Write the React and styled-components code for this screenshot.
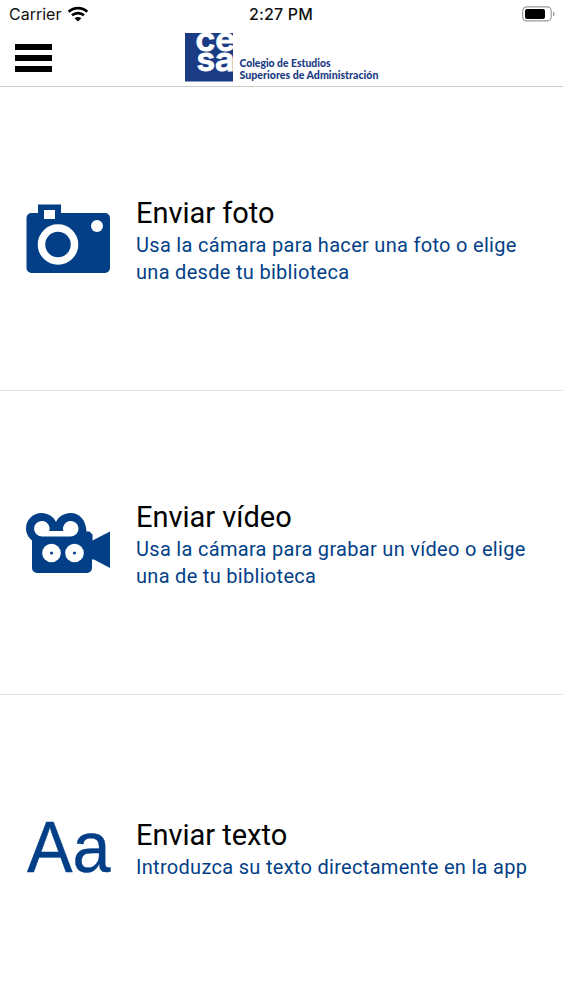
import React from "react";
import styled, { createGlobalStyle } from "styled-components";

const BLUE = "#033f87";
const LOGO_BLUE = "#1b3c85";

const GlobalStyle = createGlobalStyle`
  * { box-sizing: border-box; }
  body { margin: 0; background: #fff; }
`;

const Screen = styled.div`
  display: flex;
  flex-direction: column;
  width: 563px;
  height: 1000px;
  background: #fff;
  font-family: Roboto, sans-serif;
  overflow: hidden;
`;

const StatusBar = styled.div`
  display: grid;
  grid-template-columns: 1fr auto 1fr;
  align-items: center;
  height: 29px;
  flex: none;
  padding: 0 8px 1px 9px;
  font-family: Inter, sans-serif;
  font-size: 16px;
  color: #111;
`;

const Carrier = styled.div`
  display: flex;
  align-items: center;
  gap: 6px;
  svg { display: block; margin-top: -1px; }
`;

const Time = styled.div`
  font-weight: 500;
  letter-spacing: 0.2px;
  margin-right: 2px;
`;

const Battery = styled.svg`
  display: block;
  justify-self: end;
`;

const Header = styled.header`
  display: flex;
  align-items: flex-start;
  height: 58px;
  flex: none;
  padding: 4px 0 0 15px;
  border-bottom: 1px solid #cdcdcd;
`;

const MenuButton = styled.button`
  display: flex;
  flex-direction: column;
  justify-content: space-between;
  width: 37px;
  height: 28px;
  margin: 11px 132px 0 0;
  padding: 0;
  border: 0;
  background: none;
`;

const MenuLine = styled.span`
  height: 6px;
  background: #000;
`;

const Logo = styled.svg`
  display: block;
`;

const Option = styled.section`
  display: flex;
  align-items: center;
  height: ${(p) => p.$height}px;
  flex: none;
  padding-left: 26px;
  border-bottom: ${(p) => (p.$last ? "0" : "1px solid #e2e2e2")};
`;

const IconBox = styled.div`
  width: 84px;
  margin-right: 26px;
  flex: none;
  svg { display: block; overflow: visible; }
`;

const Copy = styled.div`
  display: flex;
  flex-direction: column;
  padding-top: 2px;
`;

const Title = styled.h2`
  margin: 0;
  font-size: 29px;
  font-weight: 400;
  line-height: 38px;
  color: #000;
  letter-spacing: -0.02px;
`;

const Description = styled.p`
  margin: 0;
  font-size: 20px;
  line-height: 26.6px;
  letter-spacing: 0.3px;
  color: ${BLUE};
  white-space: pre-line;
`;

const WifiIcon = () => (
  <svg width="22" height="16" viewBox="0 0 22 16">
    <g fill="none" stroke="#000" strokeWidth="2.8">
      <path d="M1.700 5.700C7 .9 15 .9 20.300 5.700" />
      <path d="M5 9.300c3.500-3 8.500-3 12 0" />
    </g>
    <path d="M7.600 12.200c2-1.700 4.800-1.700 6.800 0L11 15.600z" />
  </svg>
);

const CameraIcon = () => (
  <svg width="84" height="69" viewBox="0 0 84 69">
    <path fill={BLUE} d="M12 0.500h23v8.500h44a5 5 0 0 1 5 5V64a5 5 0 0 1-5 5H5.500a5 5 0 0 1-5-5V14a5 5 0 0 1 5-5H12z" />
    <rect x="18" y="6" width="11" height="9" fill="#fff" />
    <circle cx="32" cy="40.500" r="16.500" fill="none" stroke="#fff" strokeWidth="7.500" />
    <circle cx="71" cy="22" r="6" fill="#fff" />
  </svg>
);

const VideoIcon = () => (
  <svg width="84" height="60" viewBox="0 0 84 60">
    <path
      fill={BLUE}
      d="M15.500 0C22 0 27.500 3.500 30 9c2.500-5.500 8-9 14.500-9C53.500 0 60 7 60.500 18.500H63.500l3 3V27.500L84 18.500V55L68 46.500H66V55a5 5 0 0 1-5 5H11a5 5 0 0 1-5-5V27.500C2.500 24.500 0 20.500 0 15.500A15.500 15.500 0 0 1 15.500 0z"
    />
    <path
      fill="#fff"
      d="M16 23.500a7.800 7.800 0 1 1 7.300-5.500H37.300a7.800 7.800 0 1 1 7.300 5.500z"
    />
    <circle cx="25.500" cy="40" r="9.300" fill="#fff" />
    <circle cx="48.500" cy="40" r="9.300" fill="#fff" />
    <circle cx="25.500" cy="40" r="1.500" fill={BLUE} />
    <circle cx="48.500" cy="40" r="1.500" fill={BLUE} />
  </svg>
);

const TextIcon = () => (
  <svg width="84" height="52" viewBox="0 0 84 52">
    <text
      x="1"
      y="50"
      fill={BLUE}
      stroke={BLUE}
      strokeWidth="0.400"
      style={{ fontFamily: '"Liberation Sans", Arial, sans-serif' }}
      fontSize="71.500"
      textLength="83.500"
      lengthAdjust="spacingAndGlyphs"
    >
      Aa
    </text>
  </svg>
);

const CesaLogo = () => (
  <Logo width="196" height="50" viewBox="0 0 196 50">
    <defs>
      <clipPath id="mark">
        <rect x="1" y="0" width="48.500" height="48.500" />
      </clipPath>
    </defs>
    <rect x="1" y="0" width="48" height="48.500" fill={LOGO_BLUE} />
    <g
      clipPath="url(#mark)"
      fill="#fff"
      stroke="#fff"
      strokeWidth="0.900"
      fontFamily="Inter, sans-serif"
      fontWeight="600"
      fontSize="33"
    >
      <text x="11.500" y="18" textLength="40" lengthAdjust="spacingAndGlyphs">ce</text>
      <text x="12.500" y="38.300" textLength="38" lengthAdjust="spacingAndGlyphs">sa</text>
    </g>
    <g fill={LOGO_BLUE} fontFamily="Lato, sans-serif" fontWeight="900" fontSize="10.300">
      <text x="55.500" y="34" textLength="91" lengthAdjust="spacingAndGlyphs">Colegio de Estudios</text>
      <text x="55.500" y="46.300" textLength="139" lengthAdjust="spacingAndGlyphs">Superiores de Administración</text>
    </g>
  </Logo>
);

const options = [
  {
    icon: <CameraIcon />,
    title: "Enviar foto",
    text: "Usa la cámara para hacer una foto o elige\nuna desde tu biblioteca",
    height: 304,
  },
  {
    icon: <VideoIcon />,
    title: "Enviar vídeo",
    text: "Usa la cámara para grabar un vídeo o elige\nuna de tu biblioteca",
    height: 304,
  },
  {
    icon: <TextIcon />,
    title: "Enviar texto",
    text: "Introduzca su texto directamente en la app",
    height: 305,
  },
];

export default function App() {
  return (
    <Screen>
      <GlobalStyle />
      <StatusBar>
        <Carrier>
          <span>Carrier</span>
          <WifiIcon />
        </Carrier>
        <Time>2:27 PM</Time>
        <Battery width="33" height="16" viewBox="0 0 33 16">
          <rect x="0.700" y="0.900" width="28.500" height="14" rx="4" fill="#fff" stroke="#999" strokeWidth="1.200" />
          <rect x="3" y="3" width="20" height="10" rx="2" fill="#000" />
          <path d="M31 5.500c2 .8 2 4.200 0 5z" fill="#999" />
        </Battery>
      </StatusBar>
      <Header>
        <MenuButton aria-label="Menú">
          <MenuLine />
          <MenuLine />
          <MenuLine />
        </MenuButton>
        <CesaLogo />
      </Header>
      {options.map((o, i) => (
        <Option key={o.title} $height={o.height} $last={i === options.length - 1}>
          <IconBox>{o.icon}</IconBox>
          <Copy>
            <Title>{o.title}</Title>
            <Description>{o.text}</Description>
          </Copy>
        </Option>
      ))}
    </Screen>
  );
}
